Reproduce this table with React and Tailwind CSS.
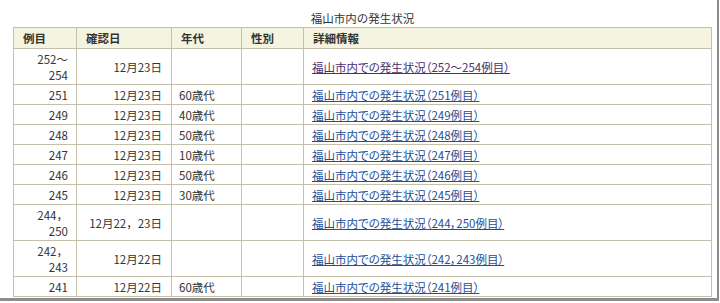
import React from 'react';

// rows of the case table, newest first
const ROWS = [
  { no: ['252～', '254'], date: '12月23日', age: '', link: '福山市内での発生状況（252～254例目）', visited: true },
  { no: ['251'], date: '12月23日', age: '60歳代', link: '福山市内での発生状況（251例目）' },
  { no: ['249'], date: '12月23日', age: '40歳代', link: '福山市内での発生状況（249例目）' },
  { no: ['248'], date: '12月23日', age: '50歳代', link: '福山市内での発生状況（248例目）' },
  { no: ['247'], date: '12月23日', age: '10歳代', link: '福山市内での発生状況（247例目）' },
  { no: ['246'], date: '12月23日', age: '50歳代', link: '福山市内での発生状況（246例目）' },
  { no: ['245'], date: '12月23日', age: '30歳代', link: '福山市内での発生状況（245例目）' },
  { no: ['244，', '250'], date: '12月22，23日', age: '', link: '福山市内での発生状況（244，250例目）' },
  { no: ['242，', '243'], date: '12月22日', age: '', link: '福山市内での発生状況（242，243例目）' },
  { no: ['241'], date: '12月22日', age: '60歳代', link: '福山市内での発生状況（241例目）' },
];

export default function App() {
  return (
    <div className="w-[720px] h-[303px] bg-white overflow-hidden">
      <div className="w-[719px] h-[301px] border-r-2 border-b-[3px] border-[#8c8c8c] pl-[13px] pt-[10px] text-[11.5px] leading-[16px] text-[#333] [font-family:'Noto_Sans_CJK_JP',sans-serif]">
        <div className="w-[699px] text-center h-[17px]">福山市内の発生状況</div>
        <table className="w-[699px] table-fixed border-collapse border border-[#a9a58f]">
          <colgroup>
            <col className="w-[63px]" />
            <col className="w-[95px]" />
            <col className="w-[70px]" />
            <col className="w-[62px]" />
            <col />
          </colgroup>
          <thead>
            <tr className="h-[21px] bg-[#f4f4e1]">
              {['例目', '確認日', '年代', '性別', '詳細情報'].map((h) => (
                <th key={h} className="border border-[#c4c0aa] px-[9px] py-0 text-left font-bold">{h}</th>
              ))}
            </tr>
          </thead>
          <tbody>
            {ROWS.map((r, i) => (
              <tr key={i} className={r.no.length > 1 ? 'h-[36px]' : 'h-[20px]'}>
                <td className="border border-[#c4c0aa] px-[8px] py-0 text-right">
                  {r.no.map((n) => <div key={n}>{n}</div>)}
                </td>
                <td className="border border-[#c4c0aa] px-[9px] py-0 text-right">{r.date}</td>
                <td className="border border-[#c4c0aa] px-[7px] py-0">{r.age}</td>
                <td className="border border-[#c4c0aa] px-[7px] py-0"></td>
                <td className="border border-[#c4c0aa] px-[8px] py-0">
                  <a href="#" className={`underline [font-feature-settings:'palt'] ${r.visited ? 'text-[#4b2f6e]' : 'text-[#1f4f93]'}`}>{r.link}</a>
                </td>
              </tr>
            ))}
          </tbody>
        </table>
      </div>
    </div>
  );
}
